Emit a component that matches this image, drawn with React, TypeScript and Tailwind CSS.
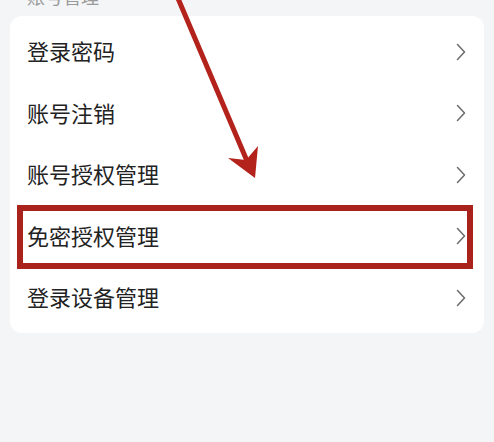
import React from 'react';

const items = ['登录密码', '账号注销', '账号授权管理', '免密授权管理', '登录设备管理'];

const Chevron = () => (
  <svg width="10" height="18" viewBox="0 0 10 18" fill="none">
    <path d="M1.5 1.5 L8.5 9 L1.5 16.5" stroke="#6b6b6b" strokeWidth="1.5" strokeLinecap="round" strokeLinejoin="round" />
  </svg>
);

const App = () => {
  return (
    <div
      className="relative w-[494px] h-[442px] overflow-hidden bg-[#f4f5f7]"
      style={{ fontFamily: '"Noto Sans CJK SC", "Noto Sans", sans-serif' }}
    >
      <div className="h-[16px] relative">
        <div className="absolute left-[27px] top-[-13px] text-[18px] leading-[18px] text-[#9a9a9a]">账号管理</div>
      </div>

      <div className="mx-[10px] bg-white rounded-[12px] pt-[6px] pb-[3px]">
        {items.map((label, i) => (
          <div key={label} className="relative h-[61.5px] flex items-center justify-between pl-[17px] pr-[18px]">
            <span className="text-[22px] leading-none text-[#222222] pb-[5px]">{label}</span>
            <span className="pb-[2px]">
              <Chevron />
            </span>
            {i === 3 && (
              <div className="absolute left-[7px] right-[11px] top-[-2px] bottom-[-1px] border-[6px] border-[#a9221b]" />
            )}
          </div>
        ))}
      </div>

      <svg className="absolute left-0 top-0 pointer-events-none" width="494" height="442" viewBox="0 0 494 442">
        <line x1="177" y1="-4" x2="250" y2="168" stroke="#b3231c" strokeWidth="5" strokeLinecap="round" />
        <path d="M255 178 L228 158 L246 160 L258 146 Z" fill="#b3231c" />
      </svg>
    </div>
  );
};

export default App;
